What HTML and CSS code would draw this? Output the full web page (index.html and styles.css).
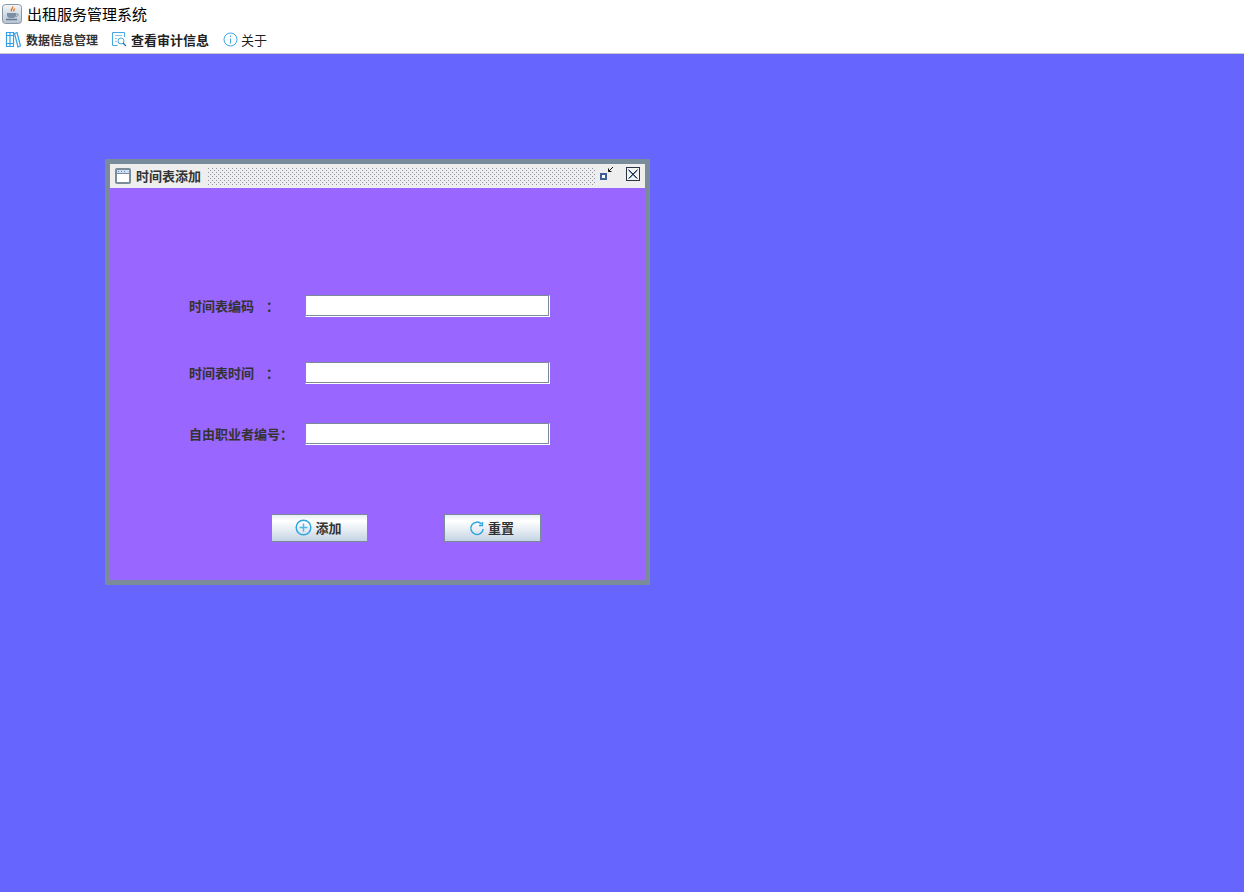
FILE: index.html
```html
<!DOCTYPE html>
<html lang="zh-CN">
<head>
    <meta charset="UTF-8">
    <meta name="viewport" content="width=device-width, initial-scale=1.0">
    <title>出租服务管理系统</title>
    <link rel="stylesheet" href="styles.css">
</head>
<body>
    <header class="app-header">
        <div class="title-row">
            <svg class="app-icon" width="20" height="20" viewBox="0 0 20 20">
                <defs>
                    <linearGradient id="appBg" x1="0" y1="0" x2="0" y2="1">
                        <stop offset="0" stop-color="#f4f6f8"/>
                        <stop offset="1" stop-color="#b4c4d6"/>
                    </linearGradient>
                </defs>
                <rect x="0.5" y="0.5" width="19" height="19" rx="3" fill="url(#appBg)" stroke="#8a97a5"/>
                <path d="M10.500 2.500c1.500 1.500-2.500 2.500-1 5M12.500 4.500c.5 1-1.500 1.500-.5 3" fill="none" stroke="#e0701a" stroke-width="1.300"/>
                <path d="M5 9h9v2.500c0 1.500-1.500 2.500-3 2.500H8c-1.500 0-3-1-3-2.500z" fill="#7d8fa3"/>
                <path d="M14 10h1.500c1 0 1 2-1.500 2.500" fill="none" stroke="#7d8fa3"/>
                <path d="M4 15.500h11" stroke="#66788c" stroke-width="1.500"/>
            </svg>
            <span class="app-title">出租服务管理系统</span>
        </div>
        <nav class="menu-bar">
            <div class="menu-item">
                <svg class="menu-icon" width="17" height="17" viewBox="0 0 17 17" fill="none" stroke="#35a0e6" stroke-width="1.200">
                    <path d="M1.500 1.500h3.500v14H1.500zM5 1.500h3.500v14H5zM1.500 4.500h3.500M5 4.500h3.500M1.500 12.500h3.500M5 12.500h3.500"/>
                    <path d="M9.500 2.500l2.500-1 3.500 13.500-2.500 1z"/>
                </svg>
                <span class="menu-small">数据信息管理</span>
            </div>
            <div class="menu-item">
                <svg class="menu-icon" width="15" height="15" viewBox="0 0 15 15" fill="none" stroke="#4aa8e0">
                    <path d="M12.500 5V.5H.5v13h5"/>
                    <path d="M3 3.500h7M3 6.500h2M3 9.500h2" stroke="#8cc6ea"/>
                    <circle cx="9" cy="9" r="3"/>
                    <path d="M11 11l3 3" stroke="#1f6fa8" stroke-width="1.300"/>
                </svg>
                <span class="menu-label">查看审计信息</span>
            </div>
            <div class="menu-item">
                <svg class="menu-icon tight" width="15" height="15" viewBox="0 0 15 15" fill="none" stroke="#3fa9e8">
                    <circle cx="7.500" cy="7.500" r="6.500"/>
                    <path d="M7.500 6.500v5M7.500 3.500v1.500"/>
                </svg>
                <span class="menu-plain">关于</span>
            </div>
        </nav>
    </header>

    <main class="desktop">
        <section class="window">
            <div class="window-title">
                <svg class="window-icon" width="16" height="16" viewBox="0 0 16 16">
                    <rect x="1" y="1" width="14" height="14" rx="1" fill="#fff" stroke="#7a8b99" stroke-width="2"/>
                    <rect x="2" y="2" width="12" height="3" fill="#cfe0f2"/>
                    <path d="M3 3.500h1M6 3.500h1M9 3.500h1" stroke="#5f86c8"/>
                    <path d="M2 5.500h12" stroke="#7a8b99"/>
                </svg>
                <span class="window-name">时间表添加</span>
                <svg class="window-grip" width="388" height="19">
                    <defs>
                        <pattern id="gripDots" width="4" height="4" patternUnits="userSpaceOnUse">
                            <rect x="1" y="1" width="1" height="1" fill="#8d96a0"/>
                            <rect x="3" y="3" width="1" height="1" fill="#8d96a0"/>
                        </pattern>
                    </defs>
                    <rect width="388" height="19" fill="url(#gripDots)"/>
                </svg>
                <div class="window-controls">
                    <svg class="ctl-restore" width="16" height="16" viewBox="0 0 16 16">
                        <rect x="2" y="9" width="5" height="5" fill="#fff" stroke="#3f5f98" stroke-width="2"/>
                        <path d="M9.500 6.500l4.500-4.500M9.500 6.500v-3M9.500 6.500h3" fill="none" stroke="#111"/>
                    </svg>
                    <svg class="ctl-close" width="14" height="14" viewBox="0 0 14 14">
                        <rect x="0.500" y="0.500" width="13" height="13" fill="#f4f4f4" stroke="#2a3440"/>
                        <path d="M2.500 3.500l8 8M11.500 3.500l-8 8" stroke="#5f86c8"/>
                        <path d="M2.500 2.500l9 9M11.500 2.500l-9 9" stroke="#2a3440"/>
                    </svg>
                </div>
            </div>
            <div class="window-body">
                <div class="form-row row-code">
                    <label class="form-label">时间表编码<span class="colon">：</span></label>
                    <input class="form-input" type="text">
                </div>
                <div class="form-row row-time">
                    <label class="form-label">时间表时间<span class="colon">：</span></label>
                    <input class="form-input" type="text">
                </div>
                <div class="form-row row-free">
                    <label class="form-label">自由职业者编号：</label>
                    <input class="form-input" type="text">
                </div>
                <div class="form-actions">
                    <button class="form-btn" type="button">
                        <svg width="17" height="17" viewBox="0 0 17 17" fill="none" stroke="#2fa4e0">
                            <circle cx="8.500" cy="8.500" r="7.300" stroke-width="1.500"/>
                            <path d="M8.500 4.500v8M4.500 8.500h8" stroke-width="1.500" stroke="#55b4e8"/>
                        </svg>
                        添加
                    </button>
                    <button class="form-btn" type="button">
                        <svg class="btn-reset-icon" width="16" height="16" viewBox="0 0 16 16" fill="none" stroke="#2fa4e0">
                            <path d="M12.500 3A6.200 6.200 0 1 0 14.200 8" stroke-width="1.500"/>
                            <path d="M13.500 1v3.500H10" stroke-width="1.300"/>
                        </svg>
                        重置
                    </button>
                </div>
            </div>
        </section>
    </main>
</body>
</html>
```
FILE: styles.css
```css
* {
    margin: 0;
    padding: 0;
    box-sizing: border-box;
}

body {
    font-family: 'Noto Sans CJK SC', 'Liberation Sans', sans-serif;
    height: 892px;
    overflow: hidden;
    background: #6666ff;
    display: flex;
    flex-direction: column;
}

/* Top bar */
.app-header {
    height: 54px;
    background: #fff;
    border-bottom: 1px solid #c9c9c9;
    padding: 4px 0 0 2px;
}

.title-row {
    display: flex;
    align-items: center;
    height: 20px;
}

.app-title {
    margin-left: 5px;
    font-size: 15px;
    line-height: 20px;
    color: #000;
}

.menu-bar {
    display: flex;
    align-items: center;
    height: 20px;
    margin-top: 6px;
    padding-left: 3px;
    color: #222;
}

.menu-item {
    display: flex;
    align-items: center;
    margin-right: 14px;
    padding-bottom: 2px;
}

.menu-icon {
    margin-right: 4px;
}

.menu-icon.tight {
    margin-right: 3px;
}

.menu-small {
    font-size: 12px;
    font-weight: 700;
    color: #333;
}

.menu-label {
    font-size: 13px;
    font-weight: 700;
}

.menu-plain {
    font-size: 13px;
}

/* Desktop */
.desktop {
    flex: 1;
    position: relative;
}

.window {
    position: absolute;
    left: 105px;
    top: 105px;
    width: 545px;
    height: 426px;
    border: 5px solid #7a8b99;
    background: #9966ff;
}

.window-title {
    height: 24px;
    background: #eeeeee;
    display: flex;
    align-items: center;
    padding-left: 5px;
}

.window-icon {
    flex: none;
}

.window-name {
    margin-left: 5px;
    padding-bottom: 2px;
    font-size: 13px;
    font-weight: 700;
    color: #333;
}

.window-grip {
    flex: none;
    margin-left: 6px;
}

.window-controls {
    display: flex;
    align-self: flex-start;
    margin-left: 4px;
}

.ctl-restore {
    margin-top: 1px;
}

.ctl-close {
    margin-left: 11px;
    margin-top: 3px;
}

/* Form */
.window-body {
    padding: 107px 0 0 79px;
}

.form-row {
    display: flex;
    align-items: center;
    height: 22px;
}

.row-time {
    margin-top: 45px;
}

.row-free {
    margin-top: 39px;
}

.form-label {
    width: 116px;
    padding-bottom: 2px;
    font-size: 13px;
    font-weight: 700;
    color: #333;
    white-space: nowrap;
}

.colon {
    margin-left: 12px;
}

.form-input {
    width: 245px;
    height: 22px;
    background: #fff;
    border: 1px solid #fff;
    border-top: 1px solid #7a8b99;
    border-left: 1px solid #7a8b99;
    box-shadow: inset -1px -1px 0 #7a8b99;
    outline: none;
}

.form-actions {
    display: flex;
    gap: 76px;
    margin-top: 69px;
    margin-left: 82px;
}

.form-btn {
    width: 97px;
    height: 28px;
    padding: 0 2px 2px 0;
    display: flex;
    align-items: center;
    justify-content: center;
    gap: 3px;
    font-family: inherit;
    font-size: 13px;
    font-weight: 700;
    color: #333;
    border: 1px solid #7a8b99;
    background: linear-gradient(#e6edf3 0, #ffffff 22%, #e4ebf2 60%, #c3d3e3 100%);
}

.btn-reset-icon {
    margin-top: 3px;
}
```
